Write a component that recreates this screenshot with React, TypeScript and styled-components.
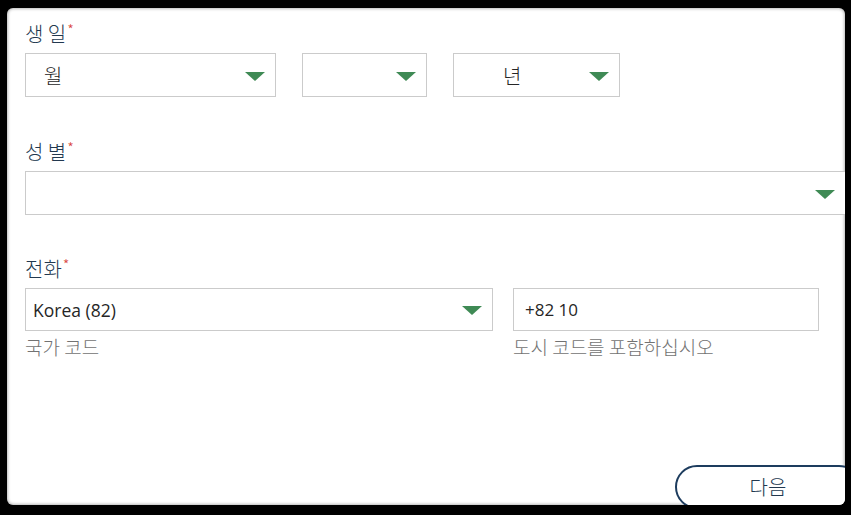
import styled, { createGlobalStyle } from 'styled-components';

const GlobalStyle = createGlobalStyle`
    html, body {
        margin: 0;
        padding: 0;
        background: #000;
    }
    body {
        font-family: 'Noto Sans', 'Noto Sans CJK KR', sans-serif;
    }
`;

const months = { label: '월', width: 251 };
const days = { label: '', width: 125 };
const years = { label: '년', width: 167 };

export default function App() {
    return (
        <>
            <GlobalStyle />
            <Page>
                <Panel>
                    <Label>
                        생 일<Star>*</Star>
                    </Label>
                    <Row $gap={26}>
                        <Select $width={months.width}>
                            <SelectText $indent={11}>{months.label}</SelectText>
                            <Arrow />
                        </Select>
                        <Select $width={days.width}>
                            <SelectText>{days.label}</SelectText>
                            <Arrow />
                        </Select>
                        <Select $width={years.width}>
                            <SelectText $indent={42}>{years.label}</SelectText>
                            <Arrow />
                        </Select>
                    </Row>

                    <Label $top={42}>
                        성 별<Star>*</Star>
                    </Label>
                    <Row>
                        <Select $width={821}>
                            <SelectText />
                            <Arrow />
                        </Select>
                    </Row>

                    <Label $top={41}>
                        전화<Star>*</Star>
                    </Label>
                    <Row $gap={20}>
                        <Column>
                            <Select $width={468} $height={43}>
                                <SelectText $latin>Korea (82)</SelectText>
                                <Arrow />
                            </Select>
                            <Hint>국가 코드</Hint>
                        </Column>
                        <Column>
                            <Input $width={306}>+82 10</Input>
                            <Hint>도시 코드를 포함하십시오</Hint>
                        </Column>
                    </Row>

                    <Footer>
                        <NextButton>다음</NextButton>
                    </Footer>
                </Panel>
            </Page>
        </>
    );
}

const Page = styled.div`
    width: 851px;
    height: 515px;
    box-sizing: border-box;
    padding: 8px 6px 10px 7px;
    display: flex;
`;

const Panel = styled.div`
    flex: 1;
    background: #fff;
    border-radius: 6px;
    box-shadow: inset 0 0 3px 1px rgba(0, 0, 0, 0.28);
    overflow: hidden;
    padding: 13px 0 0 18px;
    display: flex;
    flex-direction: column;
`;

const Label = styled.div<{ $top?: number }>`
    margin-top: ${p => p.$top || 0}px;
    margin-bottom: 6px;
    height: 26px;
    line-height: 26px;
    font-family: 'Noto Sans CJK KR', sans-serif;
    font-size: 20px;
    font-weight: 300;
    color: #22384f;
    display: flex;
    align-items: flex-start;
`;

const Star = styled.span`
    color: #d9443a;
    font-size: 15px;
    line-height: 18px;
    margin-left: 1px;
`;

const Row = styled.div<{ $gap?: number }>`
    display: flex;
    gap: ${p => p.$gap || 0}px;
`;

const Column = styled.div`
    display: flex;
    flex-direction: column;
`;

const Select = styled.div<{ $width: number; $height?: number }>`
    flex: none;
    width: ${p => p.$width}px;
    height: ${p => p.$height || 44}px;
    box-sizing: border-box;
    border: 1px solid #cbcbcb;
    background: #fff;
    display: flex;
    align-items: center;
    padding: 0 10px 0 7px;
`;

const SelectText = styled.span<{ $indent?: number; $latin?: boolean }>`
    flex: 1;
    padding-left: ${p => p.$indent || 0}px;
    font-family: ${p =>
        p.$latin ? "'Open Sans', 'Noto Sans CJK KR', sans-serif" : "'Noto Sans CJK KR', sans-serif"};
    font-size: ${p => (p.$latin ? 17.5 : 20)}px;
    font-weight: ${p => (p.$latin ? 400 : 300)};
    color: #262626;
`;

const Arrow = styled.span`
    width: 0;
    height: 0;
    border-left: 10px solid transparent;
    border-right: 10px solid transparent;
    border-top: 9px solid #3f8a55;
    margin-top: 2px;
`;

const Input = styled.div<{ $width: number }>`
    width: ${p => p.$width}px;
    height: 43px;
    box-sizing: border-box;
    border: 1px solid #cbcbcb;
    padding: 0 11px;
    display: flex;
    align-items: center;
    font-family: 'Open Sans', sans-serif;
    font-size: 17px;
    color: #262626;
`;

const Hint = styled.div`
    margin-top: 4px;
    font-family: 'Noto Sans CJK KR', sans-serif;
    font-size: 19px;
    font-weight: 300;
    line-height: 24px;
    color: #727272;
`;

const Footer = styled.div`
    margin-top: 106px;
    display: flex;
    padding-left: 650px;
`;

const NextButton = styled.button`
    flex: none;
    width: 186px;
    height: 44px;
    border: 2px solid #1d3c5e;
    border-radius: 22px;
    background: #fff;
    font-family: 'Noto Sans CJK KR', sans-serif;
    font-size: 20px;
    font-weight: 300;
    line-height: 24px;
    color: #22384f;
    padding: 0 0 1px;
`;
